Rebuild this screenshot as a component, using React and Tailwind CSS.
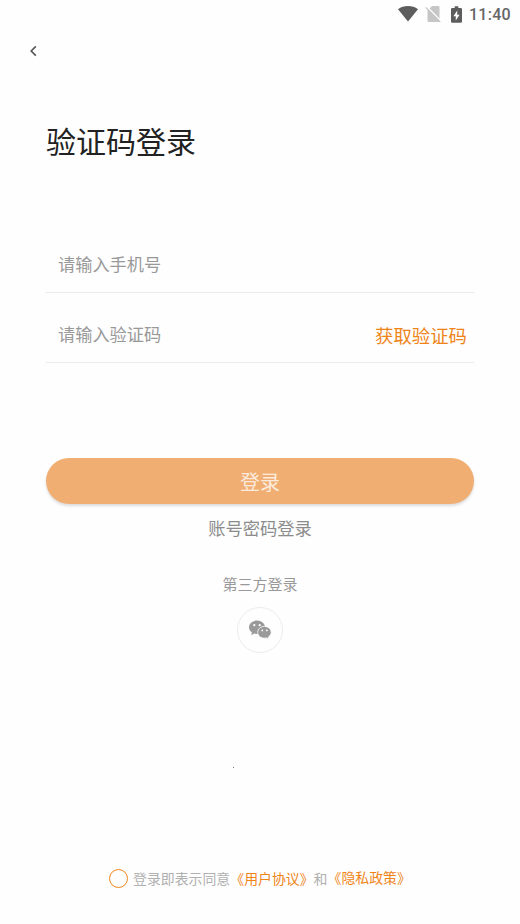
import { useState } from "react";

function StatusBar() {
  return (
    <div className="flex h-7 items-center justify-end pr-[9px] text-[#5d5d5d]">
      <svg width="20" height="16" viewBox="0 0 20 16" fill="currentColor">
        <path d="M0 3.200C2.700 1.100 6.300 0 10 0s7.300 1.100 10 3.200L10 15.500z" />
      </svg>
      <svg className="ml-[7px]" width="16" height="18" viewBox="0 0 16 18">
        <path
          d="M7 1h6.200a1.300 1.300 0 0 1 1.300 1.300v13.400a1.300 1.300 0 0 1-1.300 1.300H3.800a1.300 1.300 0 0 1-1.300-1.300V5.500z"
          fill="#c6c6c6"
        />
        <path d="M1.500 1.300 16 16" stroke="#fefefe" strokeWidth="1.400" />
        <path d="M.7 2.300 15.200 17" stroke="#c6c6c6" strokeWidth="1.200" />
      </svg>
      <svg className="ml-[10px]" width="11" height="17" viewBox="0 0 12 18">
        <path
          d="M4 0h4v2h2.700A1.300 1.300 0 0 1 12 3.300v13.400a1.300 1.300 0 0 1-1.300 1.300H1.300A1.300 1.300 0 0 1 0 16.700V3.300A1.300 1.300 0 0 1 1.300 2H4z"
          fill="currentColor"
        />
        <path d="M6.800 4.500v4.700h2.600L5.200 15.500v-4.700H2.600z" fill="#fff" />
      </svg>
      <span className="ml-[7px] pt-0.5 font-[Roboto] text-base leading-7 font-medium tracking-[0.3px] text-[#666]">
        11:40
      </span>
    </div>
  );
}

function WechatIcon() {
  return (
    <svg width="24" height="20" viewBox="0 0 24 20">
      <path
        d="M9 .6C4.500.6 1 3.500 1 7.200c0 2.100 1.100 3.900 2.900 5.100L3.300 15.300l2.900-1.800c.9.200 1.800.4 2.800.4 4.500 0 8-2.900 8-6.600S13.500.6 9 .6z"
        fill="#9a9a9a"
      />
      <path
        d="M16.500 6.400c-3.800 0-6.800 2.600-6.800 5.900s3 5.900 6.800 5.900c.8 0 1.500-.1 2.200-.3l2.300 1.200-.6-2.100c1.700-1 2.800-2.700 2.800-4.700 0-3.300-3-5.900-6.700-5.900z"
        fill="#9a9a9a"
        stroke="#fff"
        strokeWidth="0.800"
      />
      <circle cx="6.300" cy="5.200" r="1.100" fill="#fff" />
      <circle cx="11.700" cy="5.200" r="1.100" fill="#fff" />
      <circle cx="14.300" cy="10.400" r="0.900" fill="#fff" />
      <circle cx="18.800" cy="10.400" r="0.900" fill="#fff" />
    </svg>
  );
}

export default function App() {
  const [phone, setPhone] = useState("");
  const [code, setCode] = useState("");
  const [agreed, setAgreed] = useState(false);

  return (
    <main className="flex h-[924px] w-full flex-col bg-[#fefefe] font-['Noto_Sans_CJK_SC',sans-serif]">
      <StatusBar />
      <header className="flex h-[46px] items-center pl-[29px]">
        <button aria-label="返回">
          <svg
            width="8"
            height="12"
            viewBox="0 0 8 12"
            fill="none"
            stroke="#555"
            strokeWidth="1.600"
          >
            <path d="M6.800 1.400 2.200 6l4.600 4.600" />
          </svg>
        </button>
      </header>

      <div className="flex flex-col px-[46px]">
        <h1 className="mt-11 text-[30px] leading-[44px] text-[#222]">
          验证码登录
        </h1>
        <div className="mt-[75px] flex h-14 items-center border-b border-[#ebebeb] pb-0.5 pl-3">
          <input
            type="tel"
            placeholder="请输入手机号"
            value={phone}
            className="w-full text-[17.2px] outline-none placeholder:text-[#999]"
            onChange={(e) => setPhone(e.target.value)}
          />
        </div>
        <div className="mt-3.5 flex h-14 items-center border-b border-[#ebebeb] pr-[7px] pl-3">
          <input
            type="text"
            placeholder="请输入验证码"
            value={code}
            className="min-w-0 flex-1 pb-0.5 text-[17.2px] outline-none placeholder:text-[#999]"
            onChange={(e) => setCode(e.target.value)}
          />
          <button className="pt-0.5 text-[18.4px] text-[#ef8519]">
            获取验证码
          </button>
        </div>

        <button className="mt-[95px] h-[46px] rounded-full bg-[#f0ae73] pt-px text-xl text-[#fcebdc] shadow-[0_2px_3px_rgba(0,0,0,0.14)]">
          登录
        </button>
        <button className="mt-3 text-[17.3px] leading-6 text-[#8c8c8c]">
          账号密码登录
        </button>
      </div>

      <section className="mt-8 flex flex-col items-center">
        <p className="text-[15px] leading-6 text-[#999]">第三方登录</p>
        <button
          aria-label="微信登录"
          className="mt-[11px] flex size-[46px] items-center justify-center rounded-full border border-[#ececec]"
        >
          <WechatIcon />
        </button>
      </section>

      <div className="mt-[114px] ml-[233px] size-px bg-[#777]" />

      <footer className="mt-auto mb-[34px] flex h-6 items-center pl-[109px] text-[13.9px] leading-6 whitespace-nowrap text-[#b0b0b0]">
        <button
          aria-label="同意协议"
          aria-pressed={agreed}
          className="mr-[5px] size-[19px] rounded-full border-[1.5px] border-[#ef8519] aria-pressed:bg-[#ef8519]"
          onClick={() => setAgreed(!agreed)}
        />
        <span className="pb-px">登录即表示同意</span>
        <a className="pb-px text-[#ef8519]">《用户协议》</a>
        <span className="pb-px">和</span>
        <a className="pb-[3px] text-[#ef8519]">《隐私政策》</a>
      </footer>
    </main>
  );
}
